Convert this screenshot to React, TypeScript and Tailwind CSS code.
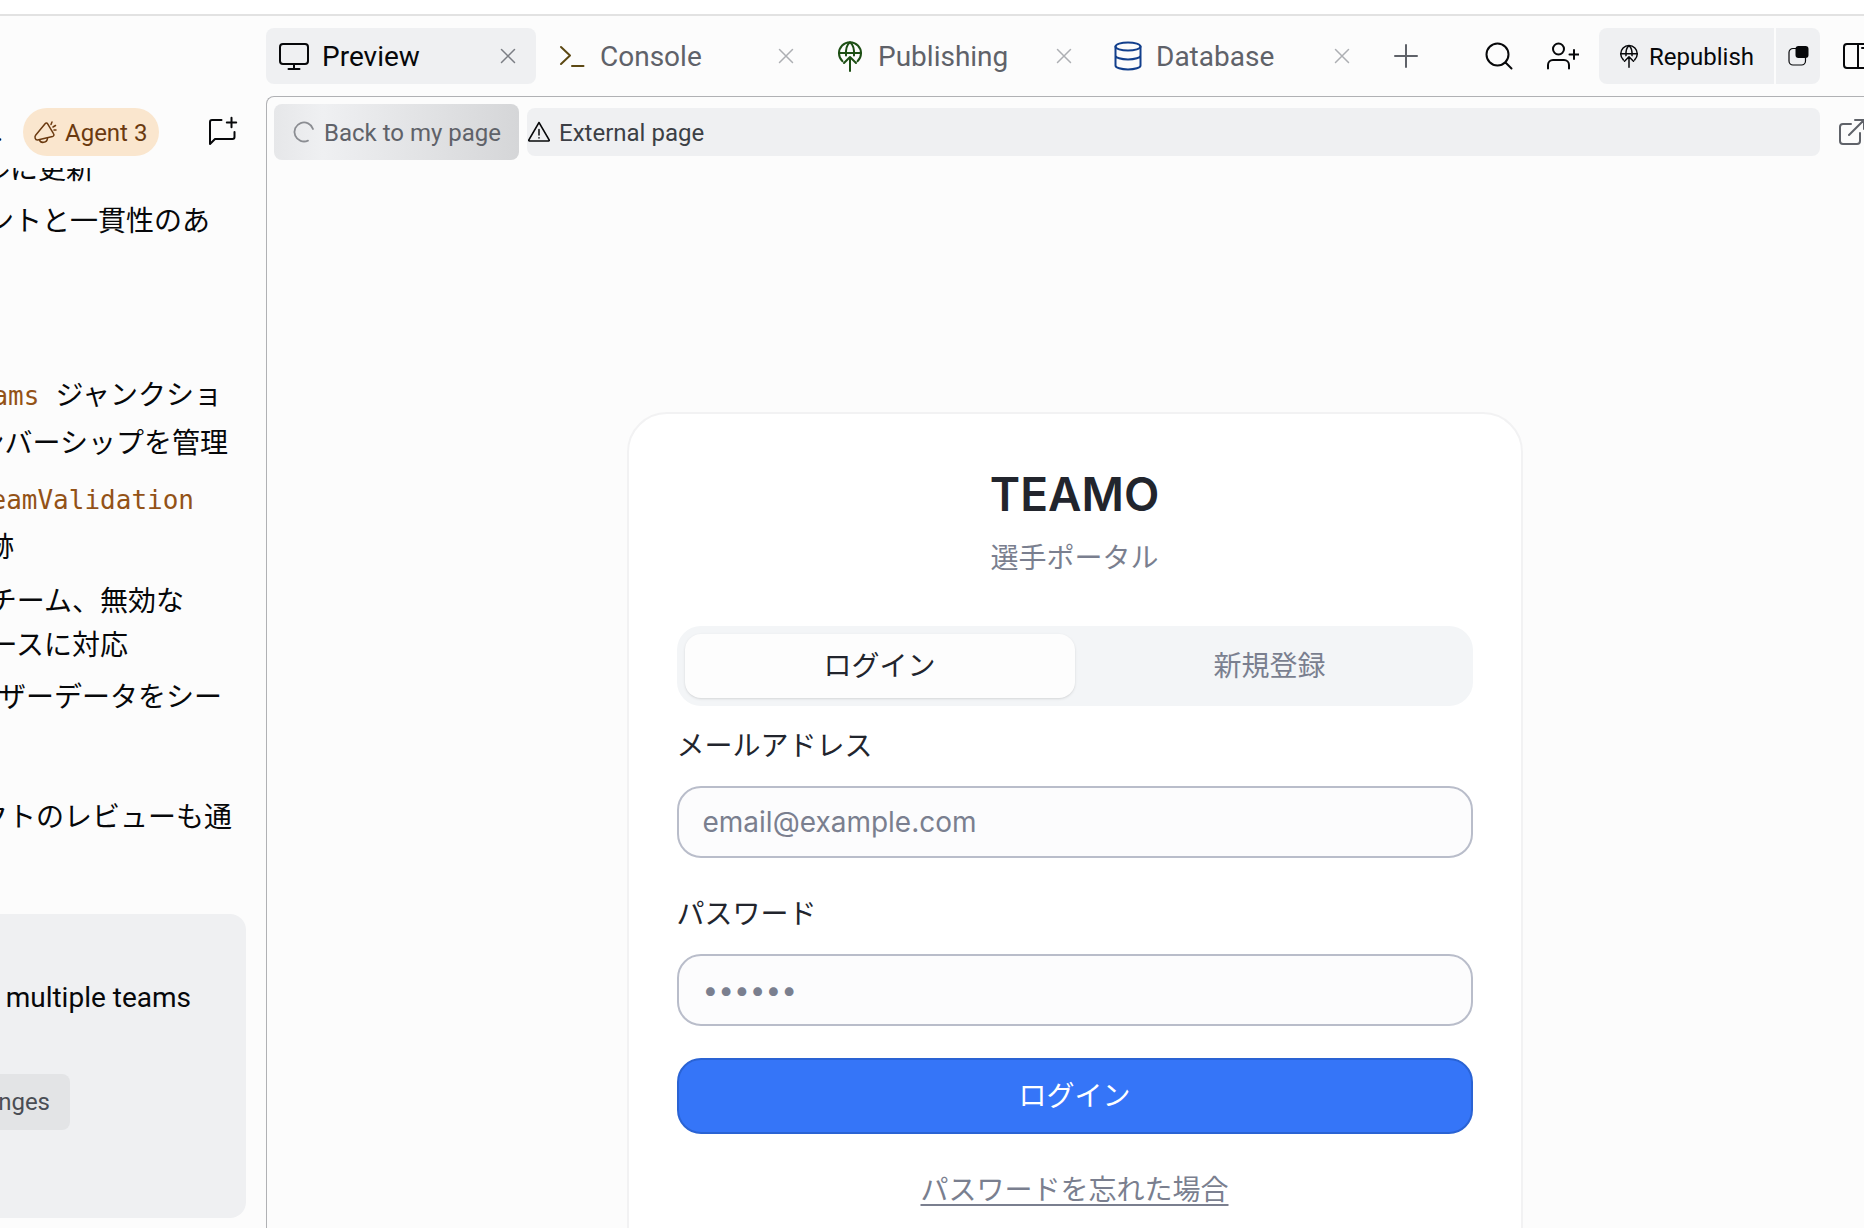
import type { ReactNode } from 'react';

const stroke = { fill: 'none', stroke: 'currentColor', strokeLinecap: 'round', strokeLinejoin: 'round' } as const;

function MonitorIcon() {
  return (
    <svg className="h-8 w-8" viewBox="0 0 32 32" {...stroke} strokeWidth="2">
      <rect x="2" y="4" width="28" height="20" rx="3" />
      <path d="M16 24v5M10.500 29h11" />
    </svg>
  );
}

function ConsoleIcon() {
  return (
    <svg className="h-8 w-8" viewBox="0 0 32 32" {...stroke} strokeWidth="2">
      <path d="M5 7l9 8.500L5 24M16 26h11.500" />
    </svg>
  );
}

function GlobeUpIcon({ className }: { className: string }) {
  return (
    <svg className={className} viewBox="0 0 32 32" {...stroke} strokeWidth="2">
      <path d="M8.500 21.200A11 11 0 1 1 23.500 21.200" />
      <path d="M5 13h22M12 15.500C11.600 10 13 4.500 16 2.200C19 4.500 20.400 10 20 15.500" />
      <path d="M16 31V17M10 23l6-6 6 6" />
    </svg>
  );
}

function DatabaseIcon() {
  return (
    <svg className="h-8 w-8" viewBox="0 0 32 32" {...stroke} strokeWidth="2">
      <ellipse cx="16" cy="6.500" rx="12.500" ry="4" />
      <path d="M3.500 6.500v19c0 2.200 5.600 4 12.500 4s12.500-1.800 12.500-4v-19M3.500 15.500c0 2.200 5.600 4 12.500 4s12.500-1.800 12.500-4" />
    </svg>
  );
}

function CloseIcon() {
  return (
    <svg className="h-4 w-4" viewBox="0 0 16 16" {...stroke} strokeWidth="1.500">
      <path d="M1.500 1.500l13 13M14.500 1.500l-13 13" />
    </svg>
  );
}

type Tab = { label: string; icon: ReactNode; color: string; active?: boolean };

const tabs: Tab[] = [
  { label: 'Preview', icon: <MonitorIcon />, color: 'text-[#07080a]', active: true },
  { label: 'Console', icon: <ConsoleIcon />, color: 'text-[#5c4813]' },
  { label: 'Publishing', icon: <GlobeUpIcon className="h-8 w-8" />, color: 'text-[#1d4f14]' },
  { label: 'Database', icon: <DatabaseIcon />, color: 'text-[#123f8c]' },
];

function TabBar() {
  return (
    <header className="flex h-20 shrink-0 items-center">
      <div role="tablist" className="flex gap-2">
        {tabs.map((tab) => (
          <div
            key={tab.label}
            className={`flex h-14 w-[270px] items-center rounded-lg pr-5 pl-3 ${tab.active ? 'bg-[#eff0f2]' : ''}`}
          >
            <button role="tab" aria-selected={!!tab.active} className="flex flex-1 items-center gap-3">
              <span className={tab.color}>{tab.icon}</span>
              <span className={`pt-0.5 text-[28px] leading-8 ${tab.active ? 'text-[#07080a]' : 'text-[#5f6269]'}`}>
                {tab.label}
              </span>
            </button>
            <button aria-label={`Close ${tab.label}`} className={tab.active ? 'text-[#7b7e84]' : 'text-[#adafb3]'}>
              <CloseIcon />
            </button>
          </div>
        ))}
      </div>
      <button aria-label="New tab" className="ml-5 text-[#5f6269]">
        <svg className="h-8 w-8" viewBox="0 0 32 32" {...stroke} strokeWidth="2">
          <path d="M16 5v22M5 16h22" />
        </svg>
      </button>
      <div className="ml-auto flex items-center text-[#07080a]">
        <button aria-label="Search" className="mr-8">
          <svg className="h-8 w-8" viewBox="0 0 32 32" {...stroke} strokeWidth="2">
            <circle cx="14.500" cy="14.500" r="11" />
            <path d="M22.500 22.500l6 6" />
          </svg>
        </button>
        <button aria-label="Invite" className="mr-5">
          <svg className="h-8 w-8" viewBox="0 0 32 32" {...stroke} strokeWidth="2">
            <circle cx="11.500" cy="9" r="5.500" />
            <path d="M1 28.500v-3.500a5 5 0 0 1 5-5h11a5 5 0 0 1 5 5v3.500M27 10v9M22.500 14.500h9" />
          </svg>
        </button>
        <div className="mr-5 flex h-14 gap-0.5 overflow-hidden rounded-lg">
          <button className="flex items-center gap-2 bg-[#eff0f2] pr-5 pl-[18px] text-2xl">
            <GlobeUpIcon className="h-6 w-6" />
            <span className="pt-0.5">Republish</span>
          </button>
          <button aria-label="Deployment status" className="flex w-11 items-center justify-center bg-[#eff0f2]">
            <svg className="h-6 w-6" viewBox="0 0 24 24" {...stroke} strokeWidth="1.200">
              <path d="M10 4.500H7a4 4 0 0 0-4 4v8.500a4 4 0 0 0 4 4h8.500a4 4 0 0 0 4-4V14" />
              <rect x="9.500" y="2" width="13" height="12" rx="3" fill="currentColor" stroke="none" />
            </svg>
          </button>
        </div>
        <button aria-label="Toggle panels" className="mr-2.5">
          <svg className="h-8 w-8" viewBox="0 0 32 32" {...stroke} strokeWidth="2">
            <rect x="4" y="4" width="26" height="24" rx="3" />
            <path d="M18 4v24M22 8h5" />
          </svg>
        </button>
      </div>
    </header>
  );
}

function AddressBar() {
  return (
    <div className="flex shrink-0 items-center py-[7px] pl-[7px] text-2xl">
      <button className="flex h-14 items-center gap-1.5 rounded-lg bg-linear-to-r from-[#e6e7e9] via-[#eff0f2] via-20% to-[#d5d6d8] pr-[18px] pl-4 text-[#5f6269]">
        <svg className="h-7 w-7 text-[#8b8d92]" viewBox="0 0 28 28" {...stroke} strokeWidth="1.800">
          <path d="M23 11A9.500 9.500 0 1 0 18 22.600" />
        </svg>
        <span className="pt-0.5">Back to my page</span>
      </button>
      <div className="ml-2 flex h-12 flex-1 items-center gap-2 rounded-lg bg-[#eff0f2] text-[#3c3f45]">
        <svg className="h-6 w-6 text-[#07080a]" viewBox="0 0 24 24" {...stroke} strokeWidth="1.500">
          <path d="M12 2.500L1.800 20c-.3.500 0 1 .6 1h19.200c.6 0 .9-.5.600-1z" />
          <path d="M12 9.500v5.500M12 17.800v.2" />
        </svg>
        <span className="pt-0.5">External page</span>
      </div>
      <button aria-label="Open in new window" className="mr-3.5 ml-4 text-[#5f6269]">
        <svg className="h-8 w-8" viewBox="0 0 32 32" {...stroke} strokeWidth="2">
          <path d="M15 8H7a3 3 0 0 0-3 3v14a3 3 0 0 0 3 3h14a3 3 0 0 0 3-3v-8M13 19L28 4M19 4h9v9" />
        </svg>
      </button>
    </div>
  );
}

const jp = "font-['Inter','Noto_Sans_CJK_JP',sans-serif]";

function Field({ id, label, type, placeholder }: { id: string; label: string; type: string; placeholder: string }) {
  return (
    <div className="flex flex-col gap-5">
      <label htmlFor={id} className="leading-10 text-[#22252d]">
        {label}
      </label>
      <input
        id={id}
        type={type}
        placeholder={placeholder}
        className="h-[72px] w-full rounded-3xl border-2 border-[#b9bdca] bg-[#fcfcfd] px-6 placeholder:text-[#7a7f8f]"
      />
    </div>
  );
}

function LoginCard() {
  return (
    <section
      className={`mx-auto mt-[245px] flex h-[960px] w-full max-w-4xl shrink-0 flex-col rounded-[40px] border-2 border-[#f2f2f3] bg-white p-12 text-[28px] ${jp}`}
    >
      <h1 className="text-center text-[46px] leading-[64px] font-semibold text-[#22252d]">TEAMO</h1>
      <p className="mt-3 text-center leading-10 text-[#7a7f8f]">選手ポータル</p>
      <div role="tablist" className="mt-12 grid h-20 grid-cols-2 rounded-3xl bg-[#f3f5f7] p-2">
        <button role="tab" aria-selected="true" className="rounded-2xl bg-[#fdfdfd] text-[#22252d] shadow-sm">
          ログイン
        </button>
        <button role="tab" aria-selected="false" className="rounded-2xl text-[#7a7f8f]">
          新規登録
        </button>
      </div>
      <form className="mt-5 flex flex-col" onSubmit={(e) => e.preventDefault()}>
        <div className="flex flex-col gap-9">
          <Field id="email" label="メールアドレス" type="email" placeholder="email@example.com" />
          <Field id="password" label="パスワード" type="password" placeholder="••••••" />
        </div>
        <button
          type="submit"
          className="mt-8 h-[76px] rounded-3xl border-2 border-[#2a63d4] bg-[#3575f8] text-white"
        >
          ログイン
        </button>
      </form>
      <a href="#reset" className="mt-9 self-center leading-10 text-[#7a7f8f] underline decoration-2 underline-offset-4">
        パスワードを忘れた場合
      </a>
    </section>
  );
}

function Code({ children }: { children: ReactNode }) {
  return <code className="font-['DejaVu_Sans_Mono',monospace] text-[26px] text-[#935217]">{children}</code>;
}

function ChatPanel() {
  return (
    <aside className="flex w-[266px] shrink-0 flex-col overflow-hidden">
      <div className="mt-20 flex h-[72px] shrink-0 items-center">
        <span className="flex w-[23px] -indent-1 text-[28px] leading-8 text-[#07080a]">.</span>
        <button className="flex h-12 items-center gap-2 rounded-full bg-[#fae6ce] pr-3 pl-2.5 text-2xl text-[#6b3a10]">
          <svg className="h-6 w-6" viewBox="0 0 24 24" {...stroke} strokeWidth="1.500">
            <path d="M12.300 3.500L2.600 15.200c-1.200 1.500-.6 5 2 4.800L19.500 16.600c1.500-.4 1.800-1.800 1-3L14.500 3.700c-.5-.8-1.600-.9-2.200-.2z" />
            <path d="M6.500 20c1 3.500 7.500 3.200 8-1.600M18 4.500l1-2.500M20 7l2.500-1.500M21 10h2" />
          </svg>
          <span className="pt-0.5">Agent 3</span>
        </button>
        <button aria-label="New chat" className="mr-7 ml-auto text-[#07080a]">
          <svg className="h-8 w-8" viewBox="0 0 32 32" {...stroke} strokeWidth="2">
            <path d="M15.500 4H6a2 2 0 0 0-2 2v22l5-5h17.500a2 2 0 0 0 2-2v-5M25.500 1.800v9.400M20.800 6.500h9.400" />
          </svg>
        </button>
      </div>
      <div className="flex min-h-0 flex-1 flex-col overflow-hidden text-[28px] whitespace-nowrap text-[#07080a]">
        <div className="-mt-6 leading-[52px]">
          <p className="flex justify-end pr-[172px]">ルに更新</p>
          <p className="flex justify-end pr-14">ントと一貫性のあ</p>
        </div>
        <ul className="mt-[124px] flex flex-col gap-2">
          <li className="leading-12">
            <p className="flex justify-end gap-4 pr-11">
              <Code>teams</Code>ジャンクショ
            </p>
            <p className="flex justify-end pr-[38px]">ンバーシップを管理</p>
          </li>
          <li className="leading-12">
            <p className="flex justify-end pr-[72px]">
              <Code>TeamValidation</Code>
            </p>
            <p className="flex justify-end pr-[252px]">跡</p>
          </li>
          <li className="leading-11">
            <p className="flex justify-end pr-[82px]">チーム、無効な</p>
            <p className="flex justify-end pr-[138px]">ースに対応</p>
          </li>
          <li className="leading-11">
            <p className="flex justify-end pr-11">ーザーデータをシー</p>
          </li>
        </ul>
        <p className="mt-[74px] flex justify-end pr-[34px] leading-12">クトのレビューも通</p>
        <div className="mt-[72px] mr-5 flex h-[304px] shrink-0 flex-col rounded-r-2xl bg-[#eff0f2]">
          <p className="mt-16 flex justify-end pr-[55px] leading-10">multiple teams</p>
          <button className="mt-14 flex h-14 w-[70px] items-center justify-end rounded-r-lg bg-[#e3e4e6] pr-5 text-2xl text-[#4a4d54]">
            nges
          </button>
        </div>
      </div>
    </aside>
  );
}

export default function App() {
  return (
    <div className="flex h-screen flex-col overflow-hidden bg-white font-['Roboto','Noto_Sans_CJK_JP',sans-serif]">
      <div className="h-4 shrink-0 border-b-2 border-[#e2e2e2]" />
      <div className="-mr-[18px] flex min-h-0 flex-1 bg-[#fcfcfc]">
        <ChatPanel />
        <div className="flex min-w-0 flex-1 flex-col">
          <TabBar />
          <main className="flex min-h-0 flex-1 flex-col overflow-hidden rounded-tl-lg border-t border-l border-[#b0b1b4]">
            <AddressBar />
            <LoginCard />
          </main>
        </div>
      </div>
    </div>
  );
}
